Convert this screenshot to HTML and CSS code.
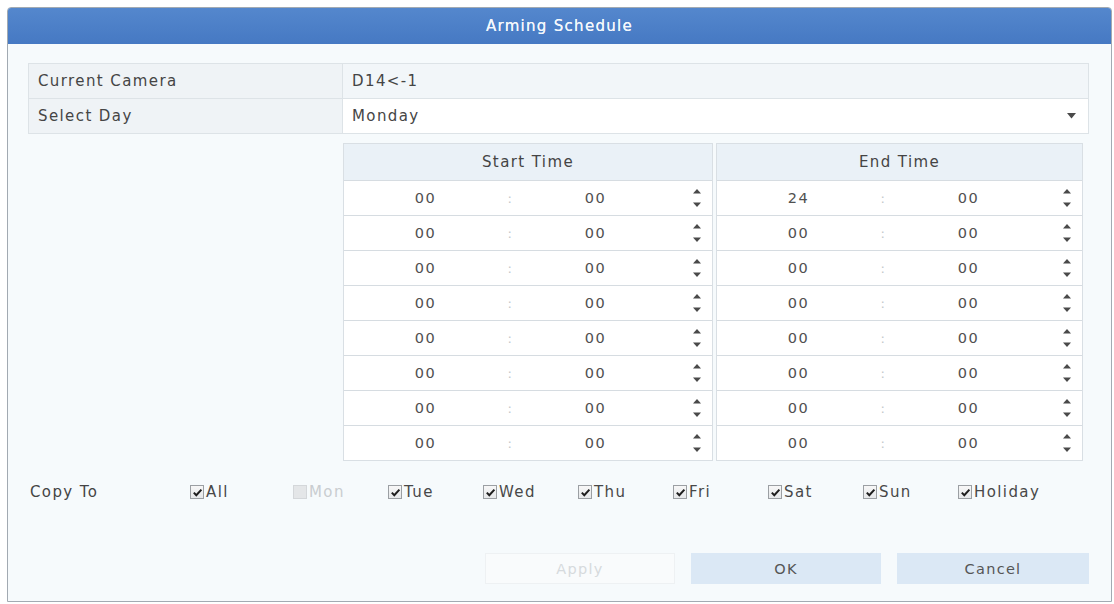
FILE: index.html
```html
<!DOCTYPE html>
<html>
<head>
<meta charset="utf-8">
<title>Arming Schedule</title>
<link rel="stylesheet" href="styles.css">
</head>
<body>
<div class="dialog">
  <div class="titlebar">Arming Schedule</div>
  <div class="content">
    <div class="info">
      <div class="info-row first">
        <div class="cell label">Current Camera</div>
        <div class="cell value shaded">D14&lt;-1</div>
      </div>
      <div class="info-row">
        <div class="cell label">Select Day</div>
        <div class="cell value select">
          <span>Monday</span>
          <svg class="arrow" width="9" height="6" viewBox="0 0 9 6"><polygon points="0,0 9,0 4.5,5.5" fill="#4a4a4a"/></svg>
        </div>
      </div>
    </div>

    <div class="times">
      <div class="tcol start">
        <div class="thead">Start Time</div>
        <div class="trow"><span class="num">00</span><span class="colon">:</span><span class="num">00</span><span></span><svg class="spin" width="8" height="18" viewBox="0 0 8 18"><polygon points="0,4.5 4,0 8,4.5" fill="#4a4a4a"/><polygon points="0,13.5 8,13.5 4,18" fill="#4a4a4a"/></svg></div>
        <div class="trow"><span class="num">00</span><span class="colon">:</span><span class="num">00</span><span></span><svg class="spin" width="8" height="18" viewBox="0 0 8 18"><polygon points="0,4.5 4,0 8,4.5" fill="#4a4a4a"/><polygon points="0,13.5 8,13.5 4,18" fill="#4a4a4a"/></svg></div>
        <div class="trow"><span class="num">00</span><span class="colon">:</span><span class="num">00</span><span></span><svg class="spin" width="8" height="18" viewBox="0 0 8 18"><polygon points="0,4.5 4,0 8,4.5" fill="#4a4a4a"/><polygon points="0,13.5 8,13.5 4,18" fill="#4a4a4a"/></svg></div>
        <div class="trow"><span class="num">00</span><span class="colon">:</span><span class="num">00</span><span></span><svg class="spin" width="8" height="18" viewBox="0 0 8 18"><polygon points="0,4.5 4,0 8,4.5" fill="#4a4a4a"/><polygon points="0,13.5 8,13.5 4,18" fill="#4a4a4a"/></svg></div>
        <div class="trow"><span class="num">00</span><span class="colon">:</span><span class="num">00</span><span></span><svg class="spin" width="8" height="18" viewBox="0 0 8 18"><polygon points="0,4.5 4,0 8,4.5" fill="#4a4a4a"/><polygon points="0,13.5 8,13.5 4,18" fill="#4a4a4a"/></svg></div>
        <div class="trow"><span class="num">00</span><span class="colon">:</span><span class="num">00</span><span></span><svg class="spin" width="8" height="18" viewBox="0 0 8 18"><polygon points="0,4.5 4,0 8,4.5" fill="#4a4a4a"/><polygon points="0,13.5 8,13.5 4,18" fill="#4a4a4a"/></svg></div>
        <div class="trow"><span class="num">00</span><span class="colon">:</span><span class="num">00</span><span></span><svg class="spin" width="8" height="18" viewBox="0 0 8 18"><polygon points="0,4.5 4,0 8,4.5" fill="#4a4a4a"/><polygon points="0,13.5 8,13.5 4,18" fill="#4a4a4a"/></svg></div>
        <div class="trow"><span class="num">00</span><span class="colon">:</span><span class="num">00</span><span></span><svg class="spin" width="8" height="18" viewBox="0 0 8 18"><polygon points="0,4.5 4,0 8,4.5" fill="#4a4a4a"/><polygon points="0,13.5 8,13.5 4,18" fill="#4a4a4a"/></svg></div>
      </div>
      <div class="tcol end">
        <div class="thead">End Time</div>
        <div class="trow"><span class="num">24</span><span class="colon">:</span><span class="num">00</span><span></span><svg class="spin" width="8" height="18" viewBox="0 0 8 18"><polygon points="0,4.5 4,0 8,4.5" fill="#4a4a4a"/><polygon points="0,13.5 8,13.5 4,18" fill="#4a4a4a"/></svg></div>
        <div class="trow"><span class="num">00</span><span class="colon">:</span><span class="num">00</span><span></span><svg class="spin" width="8" height="18" viewBox="0 0 8 18"><polygon points="0,4.5 4,0 8,4.5" fill="#4a4a4a"/><polygon points="0,13.5 8,13.5 4,18" fill="#4a4a4a"/></svg></div>
        <div class="trow"><span class="num">00</span><span class="colon">:</span><span class="num">00</span><span></span><svg class="spin" width="8" height="18" viewBox="0 0 8 18"><polygon points="0,4.5 4,0 8,4.5" fill="#4a4a4a"/><polygon points="0,13.5 8,13.5 4,18" fill="#4a4a4a"/></svg></div>
        <div class="trow"><span class="num">00</span><span class="colon">:</span><span class="num">00</span><span></span><svg class="spin" width="8" height="18" viewBox="0 0 8 18"><polygon points="0,4.5 4,0 8,4.5" fill="#4a4a4a"/><polygon points="0,13.5 8,13.5 4,18" fill="#4a4a4a"/></svg></div>
        <div class="trow"><span class="num">00</span><span class="colon">:</span><span class="num">00</span><span></span><svg class="spin" width="8" height="18" viewBox="0 0 8 18"><polygon points="0,4.5 4,0 8,4.5" fill="#4a4a4a"/><polygon points="0,13.5 8,13.5 4,18" fill="#4a4a4a"/></svg></div>
        <div class="trow"><span class="num">00</span><span class="colon">:</span><span class="num">00</span><span></span><svg class="spin" width="8" height="18" viewBox="0 0 8 18"><polygon points="0,4.5 4,0 8,4.5" fill="#4a4a4a"/><polygon points="0,13.5 8,13.5 4,18" fill="#4a4a4a"/></svg></div>
        <div class="trow"><span class="num">00</span><span class="colon">:</span><span class="num">00</span><span></span><svg class="spin" width="8" height="18" viewBox="0 0 8 18"><polygon points="0,4.5 4,0 8,4.5" fill="#4a4a4a"/><polygon points="0,13.5 8,13.5 4,18" fill="#4a4a4a"/></svg></div>
        <div class="trow"><span class="num">00</span><span class="colon">:</span><span class="num">00</span><span></span><svg class="spin" width="8" height="18" viewBox="0 0 8 18"><polygon points="0,4.5 4,0 8,4.5" fill="#4a4a4a"/><polygon points="0,13.5 8,13.5 4,18" fill="#4a4a4a"/></svg></div>
      </div>
    </div>

    <div class="copy">
      <span class="copy-label">Copy To</span>
      <label class="cb"><span class="box"><svg width="11" height="11" viewBox="0 0 11 11"><path d="M1.8 5.6 L4.3 8.2 L9.4 2.6" fill="none" stroke="#1e1e1e" stroke-width="2"/></svg></span>All</label>
      <label class="cb disabled"><span class="box"></span>Mon</label>
      <label class="cb"><span class="box"><svg width="11" height="11" viewBox="0 0 11 11"><path d="M1.8 5.6 L4.3 8.2 L9.4 2.6" fill="none" stroke="#1e1e1e" stroke-width="2"/></svg></span>Tue</label>
      <label class="cb"><span class="box"><svg width="11" height="11" viewBox="0 0 11 11"><path d="M1.8 5.6 L4.3 8.2 L9.4 2.6" fill="none" stroke="#1e1e1e" stroke-width="2"/></svg></span>Wed</label>
      <label class="cb"><span class="box"><svg width="11" height="11" viewBox="0 0 11 11"><path d="M1.8 5.6 L4.3 8.2 L9.4 2.6" fill="none" stroke="#1e1e1e" stroke-width="2"/></svg></span>Thu</label>
      <label class="cb"><span class="box"><svg width="11" height="11" viewBox="0 0 11 11"><path d="M1.8 5.6 L4.3 8.2 L9.4 2.6" fill="none" stroke="#1e1e1e" stroke-width="2"/></svg></span>Fri</label>
      <label class="cb"><span class="box"><svg width="11" height="11" viewBox="0 0 11 11"><path d="M1.8 5.6 L4.3 8.2 L9.4 2.6" fill="none" stroke="#1e1e1e" stroke-width="2"/></svg></span>Sat</label>
      <label class="cb"><span class="box"><svg width="11" height="11" viewBox="0 0 11 11"><path d="M1.8 5.6 L4.3 8.2 L9.4 2.6" fill="none" stroke="#1e1e1e" stroke-width="2"/></svg></span>Sun</label>
      <label class="cb"><span class="box"><svg width="11" height="11" viewBox="0 0 11 11"><path d="M1.8 5.6 L4.3 8.2 L9.4 2.6" fill="none" stroke="#1e1e1e" stroke-width="2"/></svg></span>Holiday</label>
    </div>

    <div class="buttons">
      <button class="btn apply" disabled>Apply</button>
      <button class="btn">OK</button>
      <button class="btn cancel">Cancel</button>
    </div>
  </div>
</div>
</body>
</html>
```

FILE: styles.css
```css
html, body {
  margin: 0;
  padding: 0;
  background: #ffffff;
}

body {
  font-family: "DejaVu Sans", "Liberation Sans", sans-serif;
  font-size: 15px;
  letter-spacing: 1.4px;
  color: #454545;
}

.dialog {
  box-sizing: border-box;
  width: 1105px;
  height: 595px;
  margin: 7px 0 0 7px;
  border: 1px solid #a2aab2;
  border-radius: 4px 4px 0 0;
  background: #f6fafc;
  display: flex;
  flex-direction: column;
  overflow: hidden;
}

.titlebar {
  height: 36px;
  flex: none;
  background: linear-gradient(#5487cd, #4679c3);
  color: #f3f7fc;
  display: flex;
  align-items: center;
  justify-content: center;
  font-size: 15px;
  letter-spacing: 1.3px;
  text-shadow: 0 0 0.4px #ffffff;
}

.content {
  flex: 1;
  display: flex;
  flex-direction: column;
  padding: 19px 22px 17px 20px;
}

/* info table */
.info {
  border: 1px solid #dde3e7;
  background: #ffffff;
}

.info-row {
  display: grid;
  grid-template-columns: 314px 1fr;
  height: 34px;
}

.info-row + .info-row {
  border-top: 1px solid #dde3e7;
}

.cell {
  display: flex;
  align-items: center;
  padding: 0 9px;
}

.cell.label {
  background: #eff3f6;
  border-right: 1px solid #dde3e7;
}

.cell.shaded {
  background: #f2f6f9;
}

.cell.select {
  justify-content: space-between;
  padding-right: 12px;
  background: #ffffff;
}

.arrow {
  display: block;
}

/* time tables */
.times {
  margin: 9px 0 0 315px;
  display: grid;
  grid-template-columns: 370px 367px;
  column-gap: 3px;
  width: 740px;
}

.tcol {
  border: 1px solid #d9dfe4;
  background: #ffffff;
}

.thead {
  height: 36px;
  background: #eaf1f7;
  display: flex;
  align-items: center;
  justify-content: center;
  color: #444444;
}

.trow {
  height: 34px;
  border-top: 1px solid #d6dce1;
  display: grid;
  grid-template-columns: 85px 85px 85px 1fr 8px;
  align-items: center;
  padding: 0 11px 0 39px;
}

.num {
  text-align: center;
  color: #505050;
  font-size: 14.5px;
}

.colon {
  text-align: center;
  color: #c2c7cb;
  font-size: 13px;
}

.spin {
  display: block;
}

/* copy to */
.copy {
  margin-top: 16px;
  height: 30px;
  display: grid;
  grid-template-columns: 162px 103px repeat(7, 95px) auto;
  align-items: center;
}

.copy-label {
  padding-left: 2px;
  color: #444444;
}

.cb {
  display: flex;
  align-items: center;
  color: #484848;
}

.box {
  box-sizing: border-box;
  width: 14px;
  height: 14px;
  margin-right: 2px;
  border: 1px solid #9b9fa3;
  background: linear-gradient(#f7f7f7, #e6e8ea);
  display: flex;
  align-items: center;
  justify-content: center;
}

.box svg {
  display: block;
}

.cb.disabled {
  color: #c9cdd0;
}

.cb.disabled .box {
  border-color: #d4d7da;
  background: #e4e6e8;
}

/* buttons */
.buttons {
  margin-top: auto;
  display: flex;
  justify-content: flex-end;
  gap: 16px;
}

.btn {
  width: 190px;
  height: 31px;
  border: none;
  background: #dbe8f5;
  color: #555555;
  font-family: "DejaVu Sans", "Liberation Sans", sans-serif;
  font-size: 14.5px;
  letter-spacing: 1.3px;
  padding: 0;
}

.btn.cancel {
  width: 192px;
}

.btn.apply {
  background: #f9fbfc;
  border: 1px solid #eef1f3;
  color: #d6dadd;
}
```
